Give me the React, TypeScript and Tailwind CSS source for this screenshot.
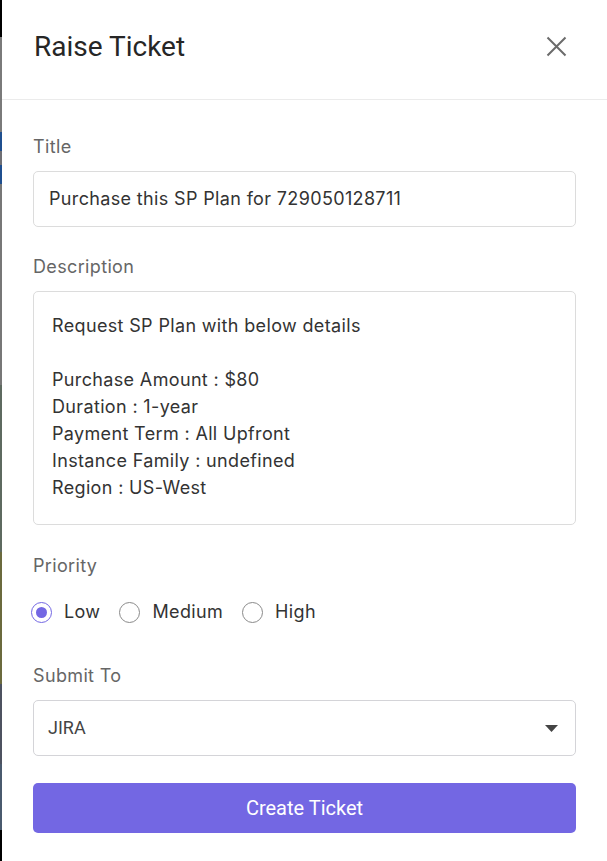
import { useState } from 'react'

const PRIORITIES = ['Low', 'Medium', 'High'] as const

const DESCRIPTION = [
  'Request SP Plan with below details',
  '',
  'Purchase Amount : $80',
  'Duration : 1-year',
  'Payment Term : All Upfront',
  'Instance Family : undefined',
  'Region : US-West',
]

export default function App() {
  const [priority, setPriority] = useState<(typeof PRIORITIES)[number]>('Low')

  return (
    <div className="flex h-[861px] w-[607px] overflow-hidden bg-white font-['Inter',sans-serif]">
      {/* backdrop sliver behind the drawer */}
      <div className="flex w-[2px] shrink-0 flex-col">
        <div className="h-[37px] bg-black" />
        <div className="h-[95px] bg-[#7a7a7a]" />
        <div className="h-[19px] bg-[#1f4f8f]" />
        <div className="h-[14px] bg-[#6f6f74]" />
        <div className="h-[19px] bg-[#1f4f8f]" />
        <div className="h-[201px] bg-[#777777]" />
        <div className="h-[167px] bg-[#5e6a60]" />
        <div className="h-[132px] bg-[#6b6a3e]" />
        <div className="h-[80px] bg-[#4d5260]" />
        <div className="h-[66px] bg-[#4a5a6e]" />
        <div className="flex-1 bg-black" />
      </div>

      <div className="flex flex-1 flex-col">
        <div className="flex h-[100px] items-center justify-between border-b border-[#ebebeb] pb-[5px] pl-[32px] pr-[40px]">
          <h2 className="font-['Roboto',sans-serif] text-[28px] leading-[34px] text-[#262626]">Raise Ticket</h2>
          <button className="-mt-[2px] text-[#6b6b6b]">
            <svg width="21" height="21" viewBox="0 0 21 21" fill="none" stroke="currentColor" strokeWidth={2}>
              <path d="M1.5 1.5l18 18M19.5 1.5l-18 18" />
            </svg>
          </button>
        </div>

        <div className="flex flex-col pl-[31px] pr-[31px] pt-[35px] text-[18px] leading-[24px] tracking-[0.35px]">
          <label className="text-[#666]">Title</label>
          <div className="mt-[12px] flex h-[56px] items-center rounded-[5px] border border-[#dcdcdc] px-[15px] text-[#333]">
            Purchase this SP Plan for 729050128711
          </div>

          <label className="mt-[28px] text-[#666]">Description</label>
          <div className="mt-[12px] h-[234px] rounded-[5px] border border-[#dcdcdc] px-[18px] pt-[20px] leading-[27px] text-[#333]">
            {DESCRIPTION.map((line, i) => (
              <div key={i} className="h-[27px]">{line}</div>
            ))}
          </div>

          <label className="mt-[29px] text-[#666]">Priority</label>
          <div className="-ml-[2px] mt-[22px] flex h-[24px] items-center gap-[19px]">
            {PRIORITIES.map((p) => (
              <button key={p} onClick={() => setPriority(p)} className="flex items-center gap-[12px] text-[#333]">
                <span
                  className={`flex h-[21px] w-[21px] items-center justify-center rounded-full border ${
                    priority === p ? 'border-[#7367e3]' : 'border-[#8a8a8a]'
                  }`}
                >
                  {priority === p && <span className="h-[11px] w-[11px] rounded-full bg-[#7367e3]" />}
                </span>
                {p}
              </button>
            ))}
          </div>

          <label className="mt-[40px] text-[#666]">Submit To</label>
          <div className="mt-[12px] flex h-[56px] items-center justify-between rounded-[5px] border border-[#d4d4d8] pl-[14px] pr-[17px] font-['Roboto',sans-serif] tracking-normal text-[#444]">
            JIRA
            <svg width="13" height="7" viewBox="0 0 13 7" fill="#444">
              <path d="M0 0h13L6.5 7z" />
            </svg>
          </div>

          <button className="mt-[27px] h-[50px] rounded-[5px] bg-[#7367e3] font-['Roboto',sans-serif] text-[20px] tracking-normal text-white">
            Create Ticket
          </button>
        </div>
      </div>
    </div>
  )
}
